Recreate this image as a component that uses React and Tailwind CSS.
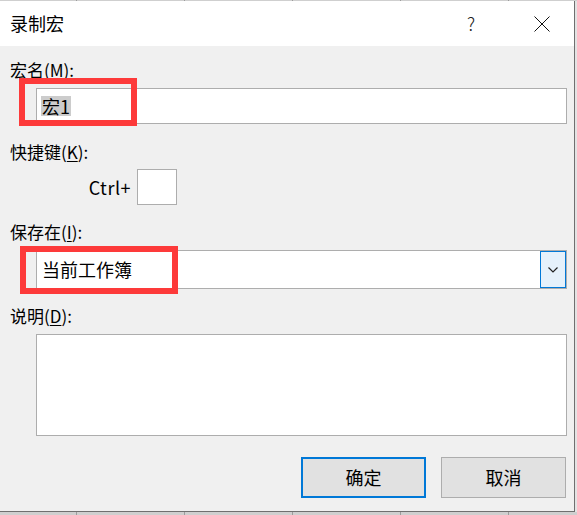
import { useState } from 'react';

const cols = [76, 184, 292, 400, 508];

const GridStrip = ({ h }) => (
  <div className={`relative w-full bg-[#cfcfcf] ${h}`}>
    {cols.map((x) => (
      <span key={x} className="absolute top-0 bottom-0 w-px bg-[#9c9c9c]" style={{ left: x }} />
    ))}
  </div>
);

const Label = ({ text, hot, mt }) => (
  <div className={`text-[17px] leading-[22px] text-black ${mt}`}>
    {text}(<span className="underline underline-offset-2">{hot}</span>):
  </div>
);

const RedMark = ({ className }) => (
  <div className={`pointer-events-none absolute border-[6px] border-[#fd3a3a] ${className}`} />
);

export default function App() {
  const [name] = useState('宏1');

  return (
    <div
      className="w-[577px] h-[515px] overflow-hidden bg-[#d6d6d6] flex flex-col"
      style={{ fontFamily: '"Noto Sans CJK SC", "Noto Sans", sans-serif' }}
    >
      <GridStrip h="h-px" />

      <div className="flex">
        {/* Dialog */}
        <div className="relative w-[575px] h-[511px] border-r border-b border-[#6f6f6f] bg-[#f0f0f0] flex flex-col">

          {/* Title bar */}
          <div className="h-[45px] bg-white flex items-center pl-[10px]">
            <span className="text-[18px] text-black">录制宏</span>
            <span className="ml-auto text-[18px] font-light text-[#222]">?</span>
            <button className="ml-[59px] mr-[24px] w-[16px] h-[16px] flex items-center justify-center">
              <svg width="16" height="16" viewBox="0 0 16 16" fill="none" stroke="#111" strokeWidth="1">
                <path d="M0.5 0.5 L15.5 15.5 M15.5 0.5 L0.5 15.5" />
              </svg>
            </button>
          </div>

          {/* Body */}
          <div className="flex flex-col px-[10px] pt-[13px]">
            <Label text="宏名" hot="M" mt="" />
            <div className="mt-[7px] ml-[26px] w-[531px] h-[36px] bg-white border border-[#adadad] flex items-center pl-[4px]">
              <span className="bg-[#cccccc] text-[18px] leading-[20px] text-black px-px">{name}</span>
            </div>

            <Label text="快捷键" hot="K" mt="mt-[17px]" />
            <div className="mt-[6px] flex items-center">
              <span className="w-[127px] text-right pr-[6px] text-[18px] tracking-[0.5px] text-black">Ctrl+</span>
              <div className="w-[40px] h-[36px] bg-white border border-[#adadad]" />
            </div>

            <Label text="保存在" hot="I" mt="mt-[16px]" />
            <div className="mt-[7px] ml-[26px] w-[531px] h-[39px] bg-white border border-[#adadad] flex items-stretch">
              <div className="flex-1 flex items-center pl-[5px] text-[18px] text-black">当前工作簿</div>
              <div className="w-[26px] border border-[#0078d7] bg-[#e5f1fb] flex items-center justify-center">
                <svg width="10" height="6" viewBox="0 0 10 6" fill="none" stroke="#222" strokeWidth="1.2">
                  <path d="M0.5 0.5 L5 5 L9.5 0.5" />
                </svg>
              </div>
            </div>

            <Label text="说明" hot="D" mt="mt-[16px]" />
            <div className="mt-[7px] ml-[26px] w-[531px] h-[102px] bg-white border border-[#adadad]" />

            <div className="mt-[21px] flex justify-end gap-[15px] mr-[-2px]">
              <button className="w-[125px] h-[41px] bg-[#e1e1e1] border-2 border-[#0078d7] text-[18px] text-black">
                确定
              </button>
              <button className="w-[125px] h-[41px] bg-[#e1e1e1] border border-[#adadad] text-[18px] text-black">
                取消
              </button>
            </div>
          </div>

          {/* annotation boxes */}
          <RedMark className="left-[19px] top-[77px] w-[118px] h-[48px]" />
          <RedMark className="left-[20px] top-[245px] w-[158px] h-[48px]" />
        </div>

        <div className="w-[2px] bg-[#e3e3e3]" />
      </div>

      <GridStrip h="h-[3px]" />
    </div>
  );
}
